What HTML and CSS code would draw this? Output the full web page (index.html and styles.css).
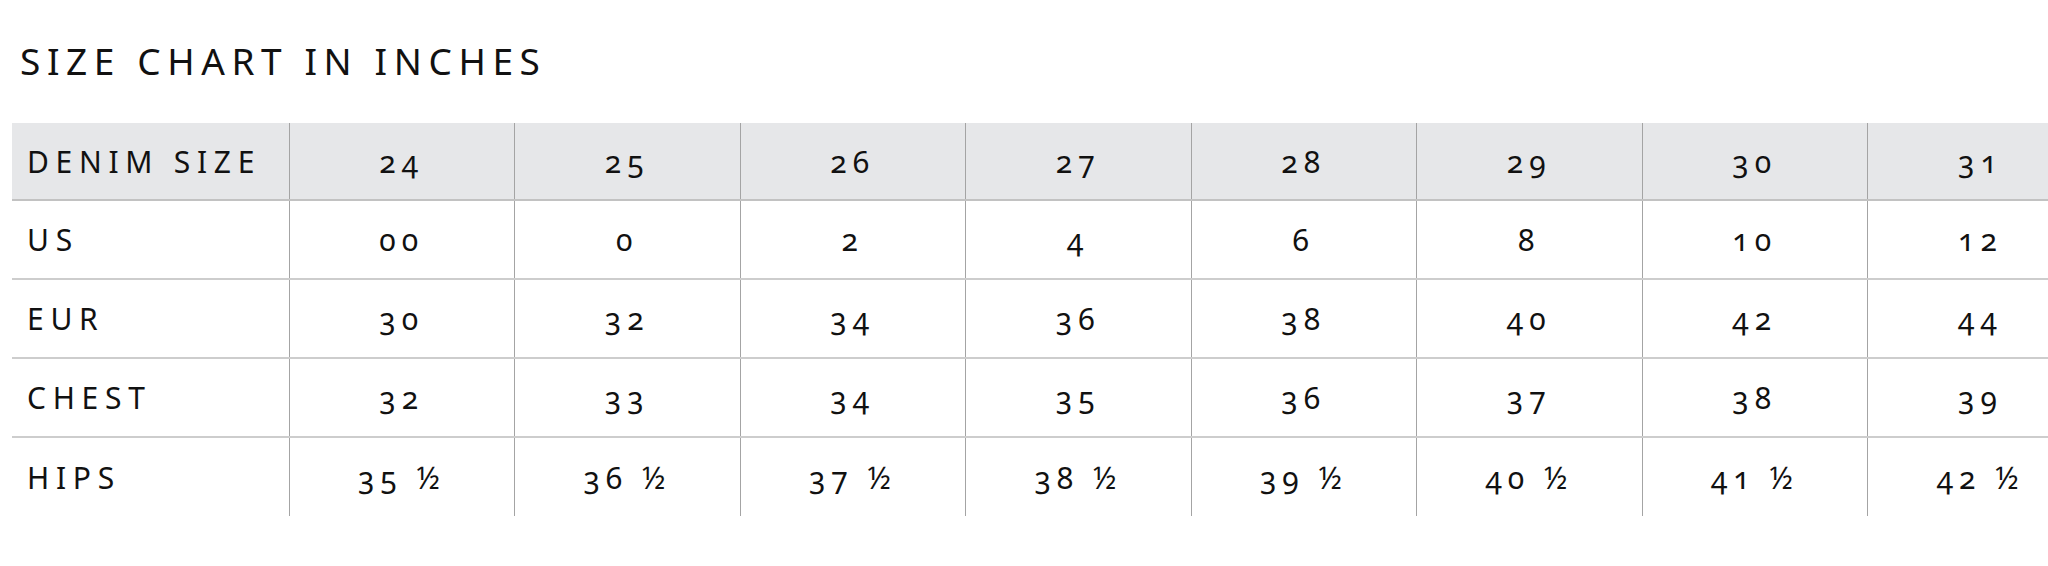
FILE: index.html
```html
<!DOCTYPE html>
<html lang="en">
<head>
<meta charset="utf-8">
<title>Size Chart</title>
<link rel="stylesheet" href="styles.css">
</head>
<body>
<div class="page">
  <h1 class="title">SIZE CHART IN INCHES</h1>
  <div class="chart-wrap">
    <table class="chart">
      <colgroup>
        <col class="col-label">
        <col class="col-size"><col class="col-size"><col class="col-size"><col class="col-size">
        <col class="col-size"><col class="col-size"><col class="col-size"><col class="col-size">
      </colgroup>
      <thead>
        <tr class="head-row">
          <th class="label">DENIM SIZE</th>
          <th>24</th><th>25</th><th>26</th><th>27</th><th>28</th><th>29</th><th>30</th><th>31</th>
        </tr>
      </thead>
      <tbody>
        <tr>
          <td class="label">US</td>
          <td>00</td><td>0</td><td>2</td><td>4</td><td>6</td><td>8</td><td>10</td><td>12</td>
        </tr>
        <tr>
          <td class="label">EUR</td>
          <td>30</td><td>32</td><td>34</td><td>36</td><td>38</td><td>40</td><td>42</td><td>44</td>
        </tr>
        <tr>
          <td class="label">CHEST</td>
          <td>32</td><td>33</td><td>34</td><td>35</td><td>36</td><td>37</td><td>38</td><td>39</td>
        </tr>
        <tr class="last-row">
          <td class="label">HIPS</td>
          <td>35 ½</td><td>36 ½</td><td>37 ½</td><td>38 ½</td><td>39 ½</td><td>40 ½</td><td>41 ½</td><td>42 ½</td>
        </tr>
      </tbody>
    </table>
  </div>
</div>
</body>
</html>
```

FILE: styles.css
```css
html, body {
  margin: 0;
  padding: 0;
  background: #ffffff;
  overflow: hidden;
}

.page {
  padding: 0 0 0 12px;
  font-family: "Noto Sans", "Open Sans", sans-serif;
  color: #111111;
}

.title {
  margin: 0;
  padding: 38px 0 0 8px;
  height: 123px;
  box-sizing: border-box;
  font-size: 37px;
  font-weight: 400;
  letter-spacing: 6.6px;
  line-height: 46px;
}

.chart-wrap {
  width: 2100px;
}

.chart {
  border-collapse: collapse;
  table-layout: fixed;
  width: 2081px;
  font-size: 30px;
  letter-spacing: 6px;
  font-variant-numeric: oldstyle-nums;
  font-feature-settings: "onum" 1;
}

.col-label { width: 277px; }
.col-size { width: 225.5px; }

.chart th,
.chart td {
  height: 77px;
  padding: 0;
  font-weight: 400;
  text-align: center;
  vertical-align: middle;
  border-left: 1px solid #a4a4a4;
  border-bottom: 2px solid #cdcdcd;
  white-space: nowrap;
}

.chart .label {
  text-align: left;
  padding-left: 15px;
  border-left: none;
  letter-spacing: 6.7px;
}

.head-row th {
  background: #e6e7e9;
  border-bottom: 2px solid #c2c2c2;
  height: 76px;
}

.last-row td {
  height: 78px;
  border-bottom: none;
}
```
